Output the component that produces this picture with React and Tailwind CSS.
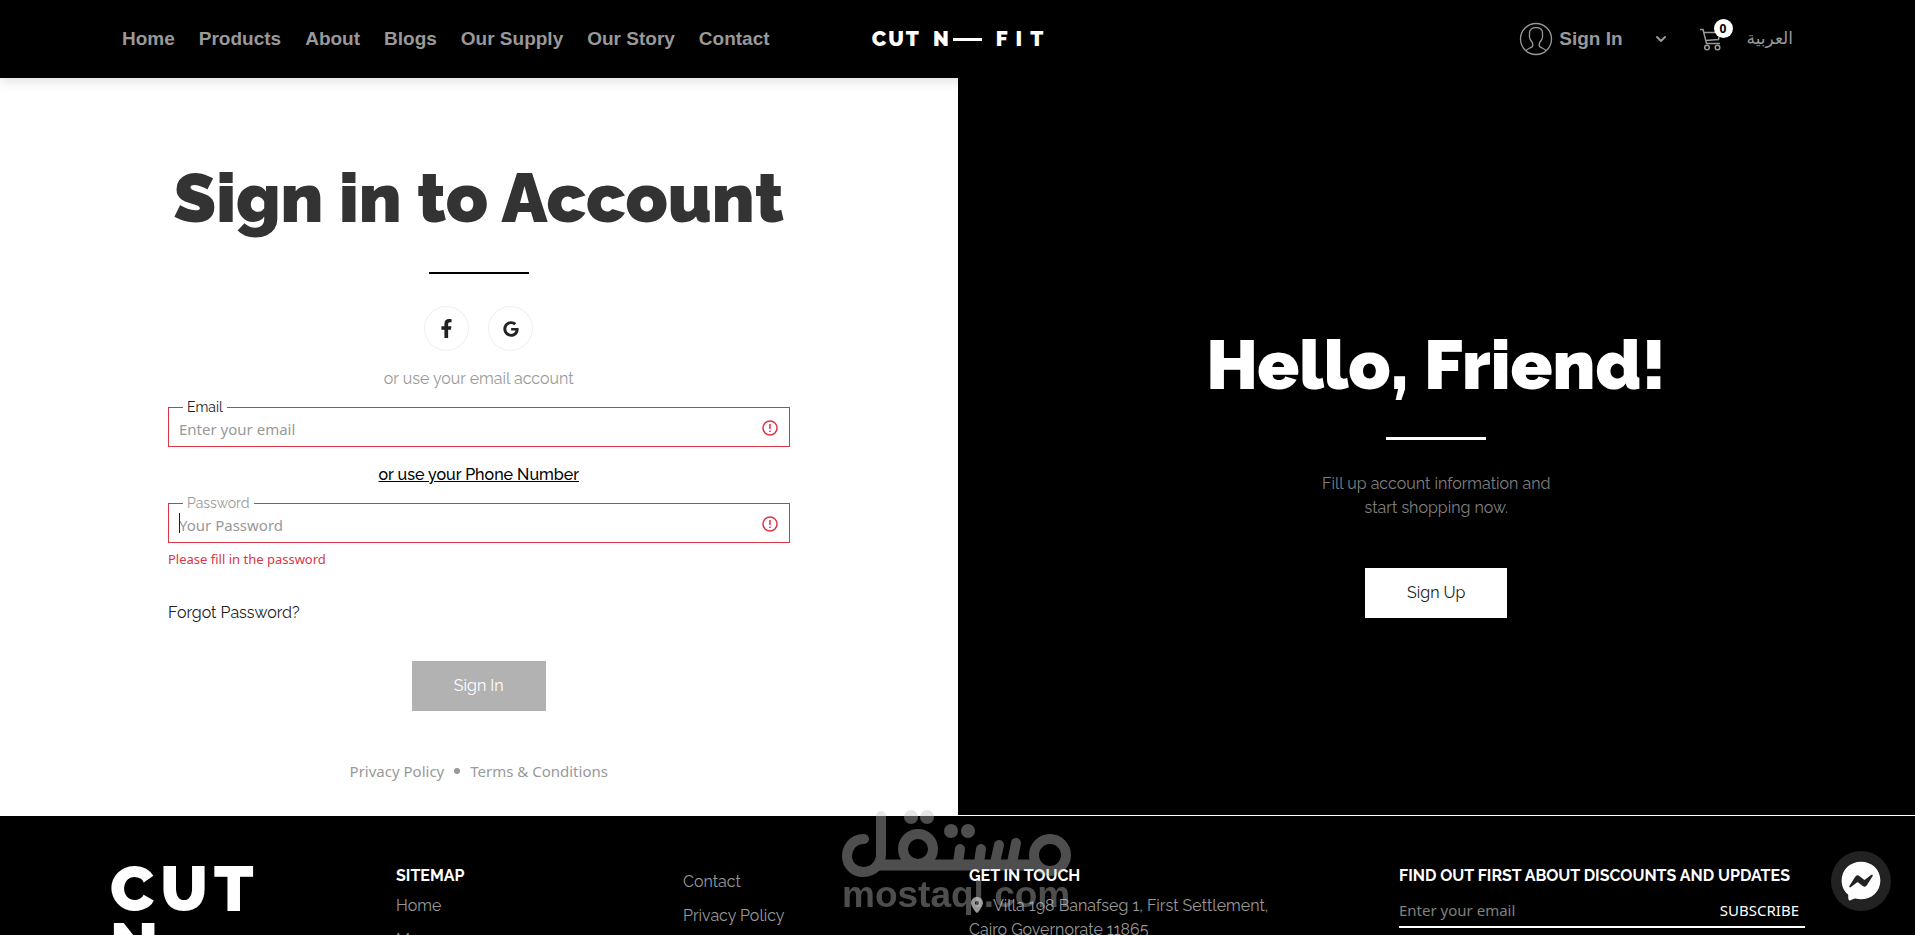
import React, { useState } from "react";
import { FaFacebookF, FaGoogle, FaFacebookMessenger } from "react-icons/fa";
import { FaLocationDot } from "react-icons/fa6";
import { ChevronDown } from "lucide-react";

const navLinks = ["Home", "Products", "About", "Blogs", "Our Supply", "Our Story", "Contact"];

const UserIcon = () => (
  <svg viewBox="0 0 34 34" className="w-[34px] h-[34px]" fill="none" stroke="currentColor" strokeWidth="1.3">
    <circle cx="17" cy="17" r="15.5" />
    <path d="M7 28.500c1.500-1.500 4.500-2.600 6-3.600.9-.7.9-2.900.3-4.400-1.500-1.600-2.800-3-2.800-5.500V11c0-3.500 2.500-5.300 6.500-5.300s6.500 1.800 6.500 5.300v4c0 2.500-1.300 3.900-2.800 5.500-.6 1.500-.6 3.700.3 4.400 1.500 1 4.500 2.100 6 3.600" />
  </svg>
);

const CartIcon = () => (
  <svg viewBox="0 0 24 24" className="w-6 h-6" fill="none" stroke="currentColor" strokeWidth="1.5">
    <path d="M1 2.500h3l3.500 14h13.500M5 5.500h16l-1.500 7L6.500 13.500" />
    <circle cx="8" cy="20.500" r="2.300" />
    <circle cx="18.500" cy="20.500" r="2.300" />
  </svg>
);

const Header = () => (
  <header className="relative z-10 bg-black h-[78px] px-[122px] flex items-center shadow-[0_2px_12px_rgba(0,0,0,0.15)]">
    <nav className="flex-1 flex gap-6 font-['Liberation_Sans',sans-serif] font-bold text-[19px] text-[#999] whitespace-nowrap">
      {navLinks.map((link) => (
        <a key={link} href="#">{link}</a>
      ))}
    </nav>
    <a
      href="#"
      className="flex items-center font-['Raleway',sans-serif] font-black text-[21px] leading-6 text-white whitespace-nowrap"
    >
      <span className="flex gap-[2px]">
        <span>C</span>
        <span>U</span>
        <span>T</span>
      </span>
      <span className="ml-[14px]">N</span>
      <span className="w-[29px] h-[3px] bg-white ml-1 mr-[14px]" />
      <span className="flex gap-2">
        <span>F</span>
        <span>I</span>
        <span>T</span>
      </span>
    </a>
    <div className="flex-1 flex items-center justify-end text-[#999]">
      <button className="flex items-center font-['Liberation_Sans',sans-serif] font-bold text-[19px]">
        <UserIcon />
        <span className="ml-[6px]">Sign In</span>
        <ChevronDown className="w-4 h-4 ml-[30px]" strokeWidth={3} />
      </button>
      <a href="#" aria-label="Cart" className="relative ml-[30px]">
        <CartIcon />
        <span className="absolute -top-2 -right-[10px] w-[19px] h-[19px] rounded-full bg-white text-black text-xs font-bold font-['Noto_Sans',sans-serif] flex items-center justify-center">
          0
        </span>
      </a>
      <a href="#" lang="ar" className="ml-6 text-[17px] font-['DejaVu_Sans',sans-serif]">العربية</a>
    </div>
  </header>
);

const Field = ({ id, label, labelClass, focused, ...props }) => (
  <div className="relative">
    <input
      id={id}
      className="block w-full h-10 border border-[#dc3545] px-[10px] pr-10 pt-[3px] text-[15px] font-['Noto_Sans',sans-serif] placeholder:text-[#999] outline-none"
      {...props}
    />
    {focused && !props.value && <span className="absolute left-[11px] top-[10px] w-px h-5 bg-[#222]" />}
    <label htmlFor={id} className={`absolute left-[15px] -top-3 bg-white px-1 leading-6 text-sm ${labelClass}`}>
      {label}
    </label>
    <svg viewBox="0 0 16 16" className="absolute right-3 top-[13px] w-4 h-4" fill="none" stroke="#dc3545" strokeWidth="1.5">
      <circle cx="8" cy="8" r="7" />
      <path d="M8 4v5M8 10.500v1.500" />
    </svg>
  </div>
);

const SignInPanel = () => {
  const [email, setEmail] = useState("");
  const [password, setPassword] = useState("");

  return (
    <section className="w-1/2 bg-white px-[168px] pt-[78px] pb-8 flex flex-col items-center">
      <h1 className="font-black text-[69px] leading-[84px] text-[#333] whitespace-nowrap">
        Sign in to Account
      </h1>
      <div className="w-[100px] h-[3px] bg-black mt-8" />
      <div className="flex gap-[19px] mt-8">
        <button aria-label="Facebook" className="w-[45px] h-[45px] rounded-full border border-[#eee] flex items-center justify-center text-[#222]">
          <FaFacebookF size={19} />
        </button>
        <button aria-label="Google" className="w-[45px] h-[45px] rounded-full border border-[#eee] flex items-center justify-center text-[#222]">
          <FaGoogle size={16} />
        </button>
      </div>
      <p className="mt-4 leading-6 text-[#999]">or use your email account</p>

      <form className="w-full mt-4 flex flex-col" onSubmit={(e) => e.preventDefault()}>
        <Field
          id="email"
          type="email"
          label="Email"
          labelClass="text-[#222]"
          placeholder="Enter your email"
          value={email}
          onChange={(e) => setEmail(e.target.value)}
        />
        <button type="button" className="self-center my-4 leading-6 font-medium underline text-black">
          or use your Phone Number
        </button>
        <Field
          id="password"
          type="password"
          label="Password"
          labelClass="text-[#999]"
          placeholder="Your Password"
          focused
          value={password}
          onChange={(e) => setPassword(e.target.value)}
        />
        <p className="mt-1 leading-6 text-[13px] font-['Noto_Sans',sans-serif] text-[#dc3545]">
          Please fill in the password
        </p>
        <a href="#" className="self-start mt-[30px] leading-6 text-[#222]">Forgot Password?</a>
        <button type="submit" className="self-center mt-9 w-[134px] h-[50px] bg-[#b2b2b2] text-white">
          Sign In
        </button>
      </form>

      <div className="mt-12 flex items-center gap-[10px] leading-6 text-[15px] font-['Noto_Sans',sans-serif] text-[#999]">
        <a href="#">Privacy Policy</a>
        <span className="w-[6px] h-[6px] rounded-full bg-[#999]" />
        <a href="#">Terms &amp; Conditions</a>
      </div>
    </section>
  );
};

const HelloPanel = () => (
  <section className="w-1/2 bg-black pt-12 flex flex-col items-center justify-center">
    <h2 className="font-black text-[69px] leading-[84px] text-white whitespace-nowrap">
      Hello, Friend!
    </h2>
    <div className="w-[100px] h-[3px] bg-white mt-[30px]" />
    <p className="mt-8 w-[250px] text-center leading-6 text-[#808080]">
      Fill up account information and start shopping now.
    </p>
    <button className="mt-12 w-[142px] h-[50px] bg-white text-[#222]">Sign Up</button>
  </section>
);

const Footer = () => (
  <footer className="bg-black border-t border-white px-[110px] pt-12 h-[240px] flex text-[#999]">
    <div className="w-[286px] -mt-1 font-black text-[64px] leading-[57px] text-white">
      <div className="flex gap-[6px]">
        <span>C</span>
        <span>U</span>
        <span>T</span>
      </div>
      <div>N</div>
    </div>
    <div className="w-[287px]">
      <h3 className="font-bold text-white leading-6">SITEMAP</h3>
      <ul className="mt-[6px] leading-6 flex flex-col gap-[10px]">
        <li><a href="#">Home</a></li>
        <li><a href="#">Men</a></li>
      </ul>
    </div>
    <ul className="w-[286px] mt-[6px] leading-6 flex flex-col gap-[10px]">
      <li><a href="#">Contact</a></li>
      <li><a href="#">Privacy Policy</a></li>
    </ul>
    <div className="w-[430px]">
      <h3 className="font-bold text-white leading-6">GET IN TOUCH</h3>
      <p className="mt-[6px] w-[310px] leading-6">
        <FaLocationDot className="inline w-4 mr-2 -mt-1 align-middle" />
        Villa 198 Banafseg 1, First Settlement, Cairo Governorate 11865
      </p>
    </div>
    <div className="w-[406px]">
      <h3 className="font-bold text-white leading-6 whitespace-nowrap">FIND OUT FIRST ABOUT DISCOUNTS AND UPDATES</h3>
      <form className="mt-[6px] flex border-b-2 border-white font-['Noto_Sans',sans-serif]" onSubmit={(e) => e.preventDefault()}>
        <input
          type="email"
          aria-label="Enter your email"
          placeholder="Enter your email"
          className="flex-1 min-w-0 h-8 text-[15px] placeholder:text-[#808080] outline-none"
        />
        <button className="pr-[6px] text-white text-[15px]">SUBSCRIBE</button>
      </form>
    </div>
  </footer>
);

const Mostaql = () => (
  <svg viewBox="0 0 232 108" className="fixed left-[841px] top-[809px] w-[232px] h-[108px] z-20 opacity-40 pointer-events-none">
    <g fill="none" stroke="#c3c3c3" strokeWidth="10" strokeLinecap="round" strokeLinejoin="round">
      <path d="M23 30C10 30 6 41 6 47c0 10 8 16 16 16 11 0 18-8 18-18V7" />
      <path d="M38 56H192" strokeWidth="11" />
      <circle cx="77" cy="40" r="15" />
      <path d="M117 54l2-14M138 54l2-14M154 54l4-18M171 54l4-20" />
      <circle cx="209" cy="46" r="16" />
    </g>
    <g fill="#c3c3c3">
      <circle cx="70" cy="8" r="7" />
      <circle cx="86" cy="8" r="7" />
      <circle cx="110" cy="22" r="7" />
      <circle cx="127" cy="22" r="7" />
      <text x="1" y="98" fontSize="37" fontWeight="700" fontFamily="Liberation Sans, sans-serif">mostaql.com</text>
    </g>
  </svg>
);

const App = () => (
  <div className="h-screen overflow-hidden font-['Raleway','Lato',sans-serif] text-base">
    <Header />
    <main className="flex h-[737px]">
      <SignInPanel />
      <HelloPanel />
    </main>
    <Footer />
    <Mostaql />
    <button
      aria-label="Open Messenger chat"
      className="fixed right-6 bottom-6 z-20 w-[60px] h-[60px] rounded-full bg-[#222] text-white flex items-center justify-center"
    >
      <FaFacebookMessenger size={40} />
    </button>
  </div>
);

export default App;
